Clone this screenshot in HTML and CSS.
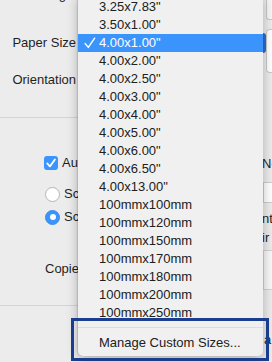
FILE: index.html
```html
<!DOCTYPE html>
<html>
<head>
<meta charset="utf-8">
<link rel="stylesheet" href="styles.css">
</head>
<body>
<div class="dialog">
  <div class="main">
    <div class="form-row r-top"><div class="lbl"><span>Printer Settings:</span></div></div>
    <div class="form-row r-paper"><div class="lbl"><span>Paper Size</span></div></div>
    <div class="form-row r-orient"><div class="lbl"><span>Orientation</span></div></div>
    <div class="sep sep1"></div>
    <div class="opt-row r-auto">
      <span class="checkbox"><svg width="14" height="14" viewBox="0 0 14 14"><path d="M3.2 7.4 L5.9 10.4 L10.9 3.4" fill="none" stroke="#fff" stroke-width="1.8" stroke-linecap="round" stroke-linejoin="round"/></svg></span>
      <span>Auto Rotate</span>
    </div>
    <div class="opt-row radio-row r-rad1">
      <span class="radio"></span>
      <span>Scale:</span>
    </div>
    <div class="opt-row radio-row r-rad2">
      <span class="radio on"><span class="dot"></span></span>
      <span>Scale to Fit:</span>
    </div>
    <div class="opt-row r-copies"><span>Copies per page:</span></div>
    <div class="sep sep2"></div>
  </div>
  <div class="side">
    <div class="s-box1"></div>
    <div class="s-pop"><span class="s-cap"></span><span class="s-white"></span></div>
    <div class="s-text s-no">No</div>
    <div class="s-field"></div>
    <div class="s-text s-nt">nt</div>
    <div class="s-text s-ir">ir</div>
    <div class="s-panel"></div>
    <div class="s-text s-a">a</div>
  </div>
</div>

<div class="menu">
  <div class="item">3.25x7.83"</div>
  <div class="item">3.50x1.00"</div>
  <div class="item sel"><svg class="tick" width="12" height="12" viewBox="0 0 12 12"><path d="M1.2 6.6 L4.3 10.4 L10.6 1.2" fill="none" stroke="#fff" stroke-width="1.5" stroke-linecap="round" stroke-linejoin="round"/></svg>4.00x1.00"</div>
  <div class="item">4.00x2.00"</div>
  <div class="item">4.00x2.50"</div>
  <div class="item">4.00x3.00"</div>
  <div class="item">4.00x4.00"</div>
  <div class="item">4.00x5.00"</div>
  <div class="item">4.00x6.00"</div>
  <div class="item">4.00x6.50"</div>
  <div class="item">4.00x13.00"</div>
  <div class="item">100mmx100mm</div>
  <div class="item">100mmx120mm</div>
  <div class="item">100mmx150mm</div>
  <div class="item">100mmx170mm</div>
  <div class="item">100mmx180mm</div>
  <div class="item">100mmx200mm</div>
  <div class="item">100mmx250mm</div>
  <div class="menu-sep"></div>
  <div class="item">Manage Custom Sizes...</div>
</div>

<div class="annot"></div>
</body>
</html>
```

FILE: styles.css
```css
html, body {
  margin: 0;
  padding: 0;
}
body {
  width: 272px;
  height: 362px;
  overflow: hidden;
  position: relative;
  background: #ececec;
  font-family: "Liberation Sans", Arial, sans-serif;
  font-size: 13px;
  color: #1f1f1f;
}
.dialog {
  display: flex;
  height: 362px;
}
.main {
  width: 262px;
  flex: none;
}
.side {
  flex: 1;
  display: flex;
  flex-direction: column;
}

.form-row {
  display: flex;
  height: 18px;
  line-height: 18px;
}
.lbl {
  width: 76px;
  display: flex;
  justify-content: flex-end;
  white-space: nowrap;
}
.lbl span { flex: none; }
.r-top { margin-top: -14px; }
.r-paper { margin-top: 30px; }
.r-orient { margin-top: 19px; }

.sep {
  height: 0;
  border-top: 1px solid #d4d4d4;
}
.sep1 { margin-top: 28px; }
.sep2 { margin-top: 27px; }

.opt-row {
  display: flex;
  align-items: center;
  height: 18px;
  line-height: 18px;
  white-space: nowrap;
  gap: 4px;
}
.r-auto { margin-top: 36px; padding-left: 44px; }
.r-rad1 { margin-top: 13px; padding-left: 45px; }
.r-rad2 { margin-top: 5px; padding-left: 45px; }
.r-copies { margin-top: 34px; padding-left: 45px; }

.checkbox {
  width: 14px;
  height: 14px;
  border-radius: 3px;
  background: #3b94fb;
  display: flex;
  flex: none;
}
.radio {
  width: 15px;
  height: 15px;
  box-sizing: border-box;
  border-radius: 50%;
  background: #fff;
  border: 1px solid #b4b4b4;
  flex: none;
  display: flex;
  align-items: center;
  justify-content: center;
}
.radio.on {
  background: #3b94fb;
  border-color: #3b8cf0;
}
.radio .dot {
  width: 6px;
  height: 6px;
  border-radius: 50%;
  background: #fff;
}

/* partial controls to the right of the menu */
.s-box1 {
  margin-top: -6px;
  margin-left: 4px;
  height: 26px;
  box-sizing: border-box;
  border: 1px solid #c8c8c8;
  border-right: none;
  border-radius: 3px 0 0 3px;
  background: #f6f6f6;
}
.s-pop {
  margin-top: 9px;
  height: 44px;
  display: flex;
}
.s-cap {
  margin-top: 4px;
  margin-left: 1px;
  width: 3px;
  height: 20px;
  background: #2c6cd0;
  border-radius: 0 3px 3px 0;
}
.s-white {
  flex: 1;
  box-sizing: border-box;
  border: 1px solid #c9c9c9;
  border-right: none;
  border-radius: 4px 0 0 4px;
  background: #fff;
}
.s-text {
  height: 18px;
  line-height: 18px;
  white-space: nowrap;
}
.s-no { margin-top: 82px; }
.s-field {
  margin-top: 9px;
  margin-left: 1px;
  height: 21px;
  box-sizing: border-box;
  border: 1px solid #cdcdcd;
  border-right: none;
  background: #fff;
}
.s-nt { margin-top: 7px; }
.s-ir { margin-top: 1px; }
.s-panel {
  margin-top: 3px;
  margin-left: 1px;
  height: 40px;
  box-sizing: border-box;
  border: 1px solid #d2d2d2;
  border-right: none;
  background: #f8f8f8;
}
.s-a { margin-top: 41px; padding-left: 2px; }

/* the open pop-up menu */
.menu {
  position: absolute;
  left: 78px;
  top: -5px;
  width: 185px;
  padding: 2.5px 0 4.5px;
  background: #f0f0f0;
  border-radius: 0 0 5px 5px;
  box-shadow: -1px 0 1px rgba(0, 0, 0, 0.12), 0 3px 12px rgba(0, 0, 0, 0.28);
}
.item {
  position: relative;
  height: 18px;
  line-height: 18px;
  padding-left: 21px;
  white-space: nowrap;
  color: #202020;
}
.item.sel {
  background: #3b94fb;
  color: #fff;
}
.tick {
  position: absolute;
  left: 6px;
  top: 3px;
}
.menu-sep {
  height: 12px;
  display: flex;
  align-items: center;
}
.menu-sep::before {
  content: "";
  flex: 1;
  height: 1px;
  background: #dcdcdc;
}

.annot {
  position: absolute;
  left: 71px;
  top: 318px;
  width: 198px;
  height: 43px;
  box-sizing: border-box;
  border: 3px solid #1b3d8e;
}
```
